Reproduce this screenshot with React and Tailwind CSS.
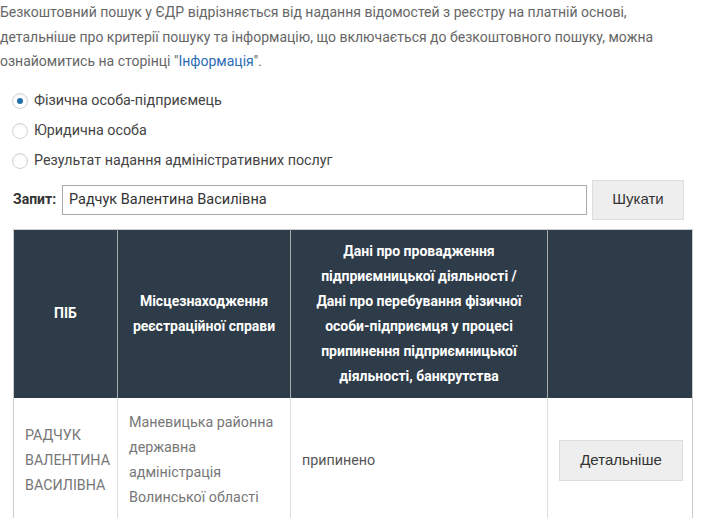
import React from "react";

const font = { fontFamily: "Roboto, 'Liberation Sans', sans-serif" };

function Radio({ checked, label }) {
  return (
    <label className="flex items-center h-[30px] gap-[6px] cursor-pointer">
      <span className="w-[16px] h-[16px] rounded-full border border-[#d4d4d4] bg-white flex items-center justify-center shadow-[inset_0_1px_2px_rgba(0,0,0,0.08)]">
        {checked && <span className="w-[6px] h-[6px] rounded-full bg-[#1f6fa8]" />}
      </span>
      <span>{label}</span>
    </label>
  );
}

export default function App() {
  return (
    <div className="w-[707px] h-[518px] overflow-hidden bg-white text-[14px] text-[#666] leading-[24.5px]" style={font}>
      {/* Intro */}
      <p className="m-0 text-[14px]">
        Безкоштовний пошук у ЄДР відрізняється від надання відомостей з реєстру на платній основі,<br />
        детальніше про критерії пошуку та інформацію, що включається до безкоштовного пошуку, можна<br />
        ознайомитись на сторінці "<a href="#" className="text-[#2b6cb5]">Інформація</a>".
      </p>

      {/* Subject type */}
      <div className="mt-[12px] pl-[12px] text-[#444] text-[14.3px]">
        <Radio checked label="Фізична особа-підприємець" />
        <Radio label="Юридична особа" />
        <Radio label="Результат надання адміністративних послуг" />
      </div>

      {/* Query */}
      <div className="flex items-center pl-[13px] mt-[4px] h-[40px]">
        <span className="font-bold text-[#333] text-[14px] w-[49px]">Запит:</span>
        <input
          defaultValue="Радчук Валентина Василівна"
          className="w-[525px] h-[30px] border border-[#aaa] px-[6px] text-[14.5px] text-[#333] outline-none"
          style={font}
        />
        <button
          className="ml-[5px] w-[92px] h-[40px] bg-[#eee] border border-[#ddd] text-[#333] text-[15px]"
          style={{ fontFamily: "'Liberation Sans', Arial, sans-serif" }}
        >
          Шукати
        </button>
      </div>

      {/* Results */}
      <table className="ml-[13px] mt-[9px] w-[679px] table-fixed border-collapse border border-[#ccc]">
        <colgroup>
          <col className="w-[104px]" />
          <col className="w-[173px]" />
          <col className="w-[257px]" />
          <col className="w-[145px]" />
        </colgroup>
        <thead>
          <tr className="bg-[#2e3b48] text-white font-bold text-[14px] text-center leading-[25px]">
            <th className="h-[169px] border-r border-[#aaa] px-[12px] py-[12px]">ПІБ</th>
            <th className="border-r border-[#aaa] px-[12px]">Місцезнаходження реєстраційної справи</th>
            <th className="border-r border-[#aaa] px-[8px]">
              Дані про провадження<br />
              підприємницької діяльності /<br />
              Дані про перебування фізичної<br />
              особи-підприємця у процесі<br />
              припинення підприємницької<br />
              діяльності, банкрутства
            </th>
            <th className="px-[12px]"></th>
          </tr>
        </thead>
        <tbody>
          <tr className="align-middle">
            <td className="px-[11px] py-[12px] border-r border-[#ddd] text-[#777] leading-[25px] text-[14.3px]">
              РАДЧУК ВАЛЕНТИНА ВАСИЛІВНА
            </td>
            <td className="px-[11px] py-[12px] border-r border-[#ddd] text-[#777] leading-[25px] text-[14.3px]">
              Маневицька районна державна адміністрація Волинської області
            </td>
            <td className="px-[11px] py-[12px] border-r border-[#ddd] text-[#555] text-[14.3px]">припинено</td>
            <td className="px-[11px] py-[12px] text-center">
              <button
                className="w-[124px] h-[41px] bg-[#eee] border border-[#ddd] text-[#333] text-[15px]"
                style={{ fontFamily: "'Liberation Sans', Arial, sans-serif" }}
              >
                Детальніше
              </button>
            </td>
          </tr>
        </tbody>
      </table>
    </div>
  );
}
